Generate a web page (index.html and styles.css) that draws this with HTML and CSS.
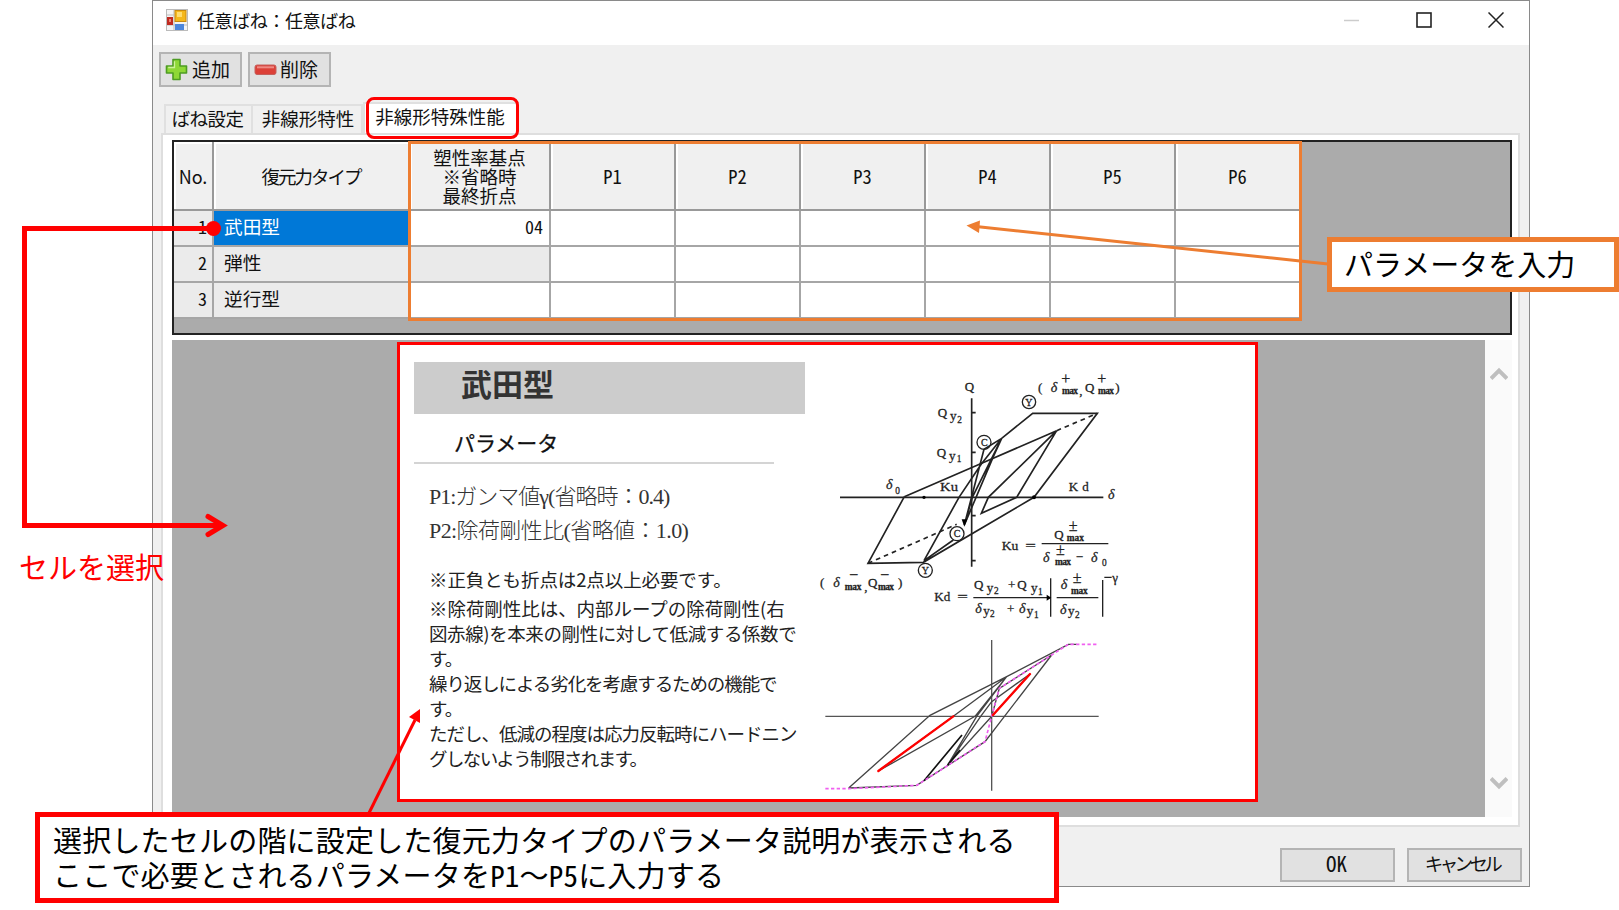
FILE: index.html
```html
<!DOCTYPE html>
<html lang="ja">
<head>
<meta charset="utf-8">
<title>任意ばね：任意ばね</title>
<link rel="stylesheet" href="styles.css">
</head>
<body>
<div class="window">
  <div class="titlebar">
    <svg class="app-icon" viewBox="0 0 22 22"><rect x=".5" y=".5" width="21" height="21" fill="#f4f4f4" stroke="#bbb"/><path d="M8 1v20M1 6h7M1 16h20" stroke="#bbb"/><rect x="1" y="8" width="6" height="8" fill="#c02a20"/><rect x="3" y="10" width="2" height="3" fill="#f08070"/><rect x="9" y="1.500" width="11" height="11" fill="#f5b81c" stroke="#c98a10"/><rect x="11" y="3" width="5" height="5" fill="#ffdc70"/><rect x="9" y="15" width="9" height="6" fill="#4c86dc"/></svg>
    <span class="title">任意ばね：任意ばね</span>
    <div class="controls">
      <svg viewBox="0 0 16 16"><path d="M0 8.500h15" stroke="#ccc" stroke-width="1.500"/></svg>
      <svg viewBox="0 0 16 16"><rect x="1" y="1" width="14" height="14" fill="none" stroke="#222" stroke-width="1.600"/></svg>
      <svg viewBox="0 0 16 16"><path d="M.5.5l15 15M15.500.5l-15 15" stroke="#222" stroke-width="1.500"/></svg>
    </div>
  </div>
  <div class="toolbar">
    <div class="btn tool"><svg width="23" height="23" viewBox="0 0 23 23"><path d="M8 1.500h7V8h6.500v7H15v6.500H8V15H1.500V8H8z" fill="#8ed836" stroke="#4e9c24" stroke-width="1.600" stroke-linejoin="round"/><path d="M9.500 3.200v6.300H3.200" fill="none" stroke="#cdf39a" stroke-width="1.300"/></svg><span class="add">追加</span></div>
    <div class="btn tool"><svg width="23" height="23" viewBox="0 0 23 23"><rect x="1" y="7" width="21" height="9.500" rx="2" fill="#dc4038" stroke="#c4605c"/><path d="M3 9.300h17" stroke="#ee8a84" stroke-width="2"/></svg><span class="del">削除</span></div>
  </div>
  <div class="tabs">
    <div class="tab t1">ばね設定</div><div class="tab t2">非線形特性</div><div class="tab t3">非線形特殊性能</div>
  </div>
  <div class="page">
    <div class="sheet">
      <div class="table">
        <div class="h no">No.</div><div class="h type-h">復元力タイプ</div><div class="h">塑性率基点<br>※省略時<br>最終折点</div><div class="h hw">P1</div><div class="h hw">P2</div><div class="h hw">P3</div><div class="h hw">P4</div><div class="h hw">P5</div><div class="h hw">P6</div>
        <div class="n hw">1</div><div class="type sel">武田型</div><div class="num hw">04</div><div></div><div></div><div></div><div></div><div></div><div></div>
        <div class="n hw">2</div><div class="type">弾性</div><div class="off"></div><div></div><div></div><div></div><div></div><div></div><div></div>
        <div class="n hw">3</div><div class="type">逆行型</div><div></div><div></div><div></div><div></div><div></div><div></div><div></div>
      </div>
    </div>
    <div class="viewer">
      <div class="doc">
        <div class="text">
          <div class="doc-title">武田型</div>
          <div class="doc-sub">パラメータ</div>
          <div class="param p1">P1:ガンマ値γ(省略時：0.4)</div>
          <div class="param p2">P2:除荷剛性比(省略値：1.0)</div>
          <div class="note first">※正負とも折点は2点以上必要です。</div>
          <div class="note l1">※除荷剛性比は、内部ループの除荷剛性(右</div>
          <div class="note l2">図赤線)を本来の剛性に対して低減する係数で</div>
          <div class="note">す。</div>
          <div class="note l4">繰り返しによる劣化を考慮するための機能で</div>
          <div class="note">す。</div>
          <div class="note l6">ただし、低減の程度は応力反転時にハードニン</div>
          <div class="note l7">グしないよう制限されます。</div>
        </div>
        <div class="figures">
          <svg width="330" height="270" viewBox="0 0 990 810">
            <g fill="none" stroke="#222" stroke-width="5">
              <path d="M90 412H880M485 115V620M485 158h12M485 277h12M485 467h12M485 602h12"/>
              <path d="M283 410L510 312L740 212M740 212L535 412L514 460L620 412L740 212"/>
              <path d="M283 410L174 610L340 607L672 412L862 160H668L575 235L522 268L463 495L550 290L575 235L514 312L447 412L342 602L430 540M575 235L487 412L463 495"/>
              <path d="M740 212L862 160M174 610L440 493" stroke-dasharray="14 12"/>
              <path d="M695 551H895M490 713H722M740 713H865M722 655V770M878 660V770M883 652h22" stroke-width="4"/>
              <circle cx="657" cy="126" r="20" stroke-width="4"/><circle cx="522" cy="247" r="21" stroke-width="4"/><circle cx="441" cy="521" r="21" stroke-width="4"/><circle cx="346" cy="631" r="21" stroke-width="4"/>
            </g>
            <circle cx="672" cy="412" r="6"/><circle cx="342" cy="412" r="5"/><path d="M710 704l14 9-14 9zM455 478l8 22 9-22z"/>
            <g class="lab">
              <text x="464" y="93">Q</text><text x="383" y="170">Q</text><text x="420" y="181">y</text><text class="s" x="442" y="188">2</text>
              <text x="380" y="291">Q</text><text x="417" y="300">y</text><text class="s" x="440" y="306">1</text>
              <text class="d" x="228" y="386">δ</text><text class="s" x="256" y="403">0</text>
              <text x="390" y="394" textLength="54" lengthAdjust="spacingAndGlyphs">Ku</text><text x="776" y="394" textLength="60">Kd</text><text class="d" x="894" y="416">δ</text>
              <text x="684" y="97">(</text><text class="d" x="722" y="97">δ</text><text class="p" x="754" y="71">+</text><text class="m" x="756" y="102" textLength="48">max</text><text x="808" y="106">,</text><text x="825" y="97">Q</text><text class="p" x="862" y="71">+</text><text class="m" x="864" y="102" textLength="48">max</text><text x="916" y="97">)</text>
              <text class="c" x="646" y="137">Y</text><text class="c" x="513" y="258">C</text><text class="c" x="431" y="532">C</text><text class="c" x="335" y="642">Y</text>
              <text x="30" y="682">(</text><text class="d" x="70" y="682">δ</text><text class="p" x="118" y="659">−</text><text class="m" x="104" y="690" textLength="50">max</text><text x="163" y="692">,</text><text x="174" y="682">Q</text><text class="p" x="211" y="659">−</text><text class="m" x="204" y="690" textLength="48">max</text><text x="264" y="682">)</text>
              <text x="575" y="570" textLength="50" lengthAdjust="spacingAndGlyphs">Ku</text><text x="646" y="570" textLength="32" lengthAdjust="spacingAndGlyphs">=</text><text x="733" y="537">Q</text><text class="p" x="776" y="512">±</text><text class="m" x="770" y="544" textLength="52">max</text>
              <text class="d" x="699" y="606">δ</text><text class="p" x="738" y="585">±</text><text class="m" x="735" y="614" textLength="48">max</text><text x="797" y="604">−</text><text class="d" x="843" y="606">δ</text><text class="s" x="876" y="617">0</text>
              <text x="373" y="724" textLength="48" lengthAdjust="spacingAndGlyphs">Kd</text><text x="442" y="724" textLength="32" lengthAdjust="spacingAndGlyphs">=</text><text x="492" y="688">Q</text><text x="530" y="696">y</text><text class="s" x="552" y="702">2</text><text x="594" y="688">+</text><text x="622" y="688">Q</text><text x="663" y="696">y</text><text class="s" x="684" y="705">1</text>
              <text class="d" x="496" y="760">δ</text><text x="520" y="764">y</text><text class="s" x="540" y="771">2</text><text x="591" y="759">+</text><text class="d" x="627" y="760">δ</text><text x="650" y="764">y</text><text class="s" x="672" y="773">1</text>
              <text class="d" x="752" y="688">δ</text><text class="p" x="788" y="670">±</text><text class="m" x="783" y="702" textLength="50">max</text><text class="d" x="750" y="763">δ</text><text x="774" y="766">y</text><text class="s" x="795" y="774">2</text><text x="907" y="666">γ</text>
            </g>
          </svg>
          <svg width="300" height="170" viewBox="0 30 900 510">
            <g fill="none" stroke="#444" stroke-width="4">
              <path d="M46 289H866M545 60V512" stroke="#555"/>
              <path d="M116 504L360 286L590 170L775 73H800M116 504L320 496L525 365L725 105L568 205L545 289L413 435L500 289L590 170L430 289L205 453L495 289L590 170M413 435L512 289L545 245L660 162M413 435L660 162"/>
              <path d="M342 482L456 345M413 435L450 390" stroke="#111" stroke-width="5"/>
              <path d="M46 506H116L320 496L525 365L545 289L568 205L725 105L775 73H866" stroke="#f060f0" stroke-width="5" stroke-dasharray="10 7"/>
              <path d="M205 453L430 289M549 285L660 162" stroke="red" stroke-width="7" stroke-linecap="round"/>
            </g>
          </svg>
        </div>
      </div>
      <div class="scroll">
        <svg viewBox="0 0 18 14"><path d="M1 11.500l8-8 8 8" fill="none" stroke="#bfbfbf" stroke-width="4"/></svg>
        <svg viewBox="0 0 18 14"><path d="M1 2.500l8 8 8-8" fill="none" stroke="#bfbfbf" stroke-width="4"/></svg>
      </div>
    </div>
  </div>
  <div class="footer"><div class="btn ok hw">OK</div><div class="btn cancel">キャンセル</div></div>
</div>

<div class="mark tab-mark"></div>
<div class="mark input-mark"></div>
<svg class="arrows" width="1619" height="910">
  <g fill="none" stroke="red">
    <path d="M213 228.500H24.500V525.500H222" stroke-width="5"/>
    <path d="M208 516.500L223 525.500L208 534.500" stroke-width="5" stroke-linecap="round"/>
    <path d="M369 813L415 720" stroke-width="3"/>
  </g>
  <circle cx="213.500" cy="228.500" r="7.500" fill="red"/>
  <path d="M420 709L420 723L409 717Z" fill="red"/>
  <path d="M1328 264L976 226.500" stroke="#ed7d31" stroke-width="3"/>
  <path d="M966.500 225.500L980 220.500L979 233Z" fill="#ed7d31"/>
</svg>
<div class="select-label">セルを選択</div>
<div class="callout input-note">パラメータを入力</div>
<div class="callout desc-note"><div>選択したセルの階に設定した復元力タイプのパラメータ説明が表示される</div><div>ここで必要とされるパラメータを<span class="hw">P1</span>～<span class="hw">P5</span>に入力する</div></div>
</body>
</html>
```

FILE: styles.css
```css
* { box-sizing: border-box; }
body {
  margin: 0;
  position: relative;
  width: 1619px;
  height: 910px;
  overflow: hidden;
  background: #fff;
  color: #111;
  font: 18px/1 "Noto Sans CJK JP", sans-serif;
  white-space: nowrap;
}
svg { display: block; flex: none; }
.hw { font-feature-settings: "hwid"; }
.window {
  width: 1378px;
  height: 887px;
  margin-left: 152px;
  border: 1px solid #8a8a8a;
  background: #f0f0f0;
}
.titlebar { display: flex; align-items: center; height: 44px; padding: 0 25px 6px 13px; background: #fff; }
.app-icon { width: 22px; height: 22px; }
.title { margin-left: 9px; letter-spacing: -.4px; }
.controls { display: flex; gap: 56px; margin-left: auto; }
.controls svg { width: 16px; height: 16px; }
.toolbar { display: flex; gap: 6px; padding: 7px 6px 0; }
.btn { display: flex; align-items: center; justify-content: center; background: #e1e1e1; border: 2px solid #b4b4b4; }
.tool { width: 83px; height: 35px; justify-content: flex-start; padding-left: 4px; font-size: 19px; }
.tool span { padding-bottom: 2px; }
.add { margin-left: 4px; }
.del { margin-left: 3px; }
.tabs { display: flex; align-items: flex-end; height: 31px; margin: 15px 0 0 11px; }
.tab { height: 29px; padding-top: 3px; border: 2px solid #e0e0e0; border-bottom: 0; font-size: 18.5px; text-align: center; }
.t1 { width: 89px; letter-spacing: -.6px; padding-right: 2px; }
.t2 { width: 110px; border-left: 0; padding-left: 2px; }
.t3 { width: 156px; height: 31px; background: #fff; padding: 3px 2px 0 0; }
.page { width: 1359px; height: 694px; margin-left: 8px; padding: 5px 6px 0 9px; border: 2px solid #dedede; background: #fff; }
.sheet { width: 1340px; height: 195px; border: 2px solid #222; background: #ababab; }
.table { display: grid; grid-template-columns: 40px 196px 141px repeat(6, 125px); grid-template-rows: 68.500px repeat(3, 36px); width: 1126px; }
.table > div { display: flex; align-items: center; border: solid #a6a6a6; border-width: 0 2px 2px 0; background: #fff; padding-bottom: 3px; }
.table > .h { justify-content: center; text-align: center; background: #f0f0f0; line-height: 18.7px; border-color: #999; padding: 2px 0 0; box-shadow: inset 2px 2px #fff; font-size: 18.5px; }
.table > .no { font-size: 18px; }
.table > .type-h { letter-spacing: -2px; }
.table > .n { justify-content: flex-end; padding-right: 5px; background: #ebebeb; }
.table > .type { padding-left: 10px; background: #ebebeb; font-size: 18.7px; }
.table > .sel { background: #0078d7; color: #fff; }
.table > .num { justify-content: flex-end; padding-right: 6px; }
.table > .off { background: #eaeaea; }
.viewer { display: flex; width: 1340px; height: 477px; margin-top: 5px; background: #ababab; }
.doc { display: flex; width: 861px; height: 460px; margin: 2px 0 0 225px; border: 3px solid red; background: #fff; }
.text { width: 410px; padding: 17px 0 0 14px; color: #333; }
.doc-title { width: 391px; height: 52px; padding: 5px 0 0 47px; background: #ccc; font-size: 31px; font-weight: 700; }
.doc-sub { width: 360px; height: 50px; padding: 18px 0 0 40px; border-bottom: 2px solid #d4d4d4; color: #111; font-size: 21px; -webkit-text-stroke: .3px #111; }
.param { margin-left: 15px; height: 34px; font: 22px/34px "Liberation Serif", "Noto Sans CJK JP", serif; font-weight: 300; }
.p1 { margin-top: 16px; letter-spacing: -1px; }
.p2 { letter-spacing: -.6px; }
.note { height: 25px; margin-left: 15px; font-size: 18.5px; line-height: 25px; letter-spacing: -1px; color: #222; }
.first { margin-top: 19px; height: 29px; letter-spacing: -.1px; }
.l1 { letter-spacing: -.05px; }
.l2 { letter-spacing: -.4px; }
.l4 { letter-spacing: -1.1px; }
.l6 { letter-spacing: -1px; }
.l7 { letter-spacing: -1.6px; }
.figures { padding-top: 15px; }
.lab { font: 39px "Liberation Serif", serif; fill: #222; stroke: #222; stroke-width: .8px; }
.lab .s { font-size: 28px; }
.lab .m { font-size: 28px; font-weight: bold; }
.lab .c { font-size: 30px; }
.lab .d { font-size: 42px; font-style: italic; }
.lab .p { font-size: 48px; }
.scroll { display: flex; flex-direction: column; justify-content: space-between; align-items: center; width: 27px; margin-left: auto; padding: 27px 0; background: #fafafa; }
.scroll svg { width: 18px; height: 14px; }
.footer { display: flex; justify-content: flex-end; gap: 12px; padding: 21px 7px 0; }
.footer .btn { width: 115px; height: 34px; padding-bottom: 4px; }
.footer .ok { font-size: 21px; padding-right: 2px; }
.footer .cancel { font-size: 18.5px; letter-spacing: -3.600px; padding-right: 5px; }
.mark { position: absolute; border: 3px solid; }
.tab-mark { left: 366px; top: 97px; width: 153px; height: 42px; border-color: red; border-radius: 8px; }
.input-mark { left: 408px; top: 141px; width: 894px; height: 180px; border-color: #ed7d31; }
.arrows { position: absolute; left: 0; top: 0; }
.select-label { position: absolute; left: 19px; top: 552px; font-size: 29px; color: red; }
.callout { position: absolute; border: 5px solid; background: #fff; -webkit-text-fill-color: #000; font-size: 29px; }
.input-note { left: 1327px; top: 237px; width: 292px; height: 55px; padding: 7px 0 0 12px; border-color: #ed7d31; }
.desc-note { left: 35px; top: 812px; width: 1024px; height: 91px; padding: 5px 0 0 13px; border-color: red; line-height: 35px; letter-spacing: .2px; }
```
